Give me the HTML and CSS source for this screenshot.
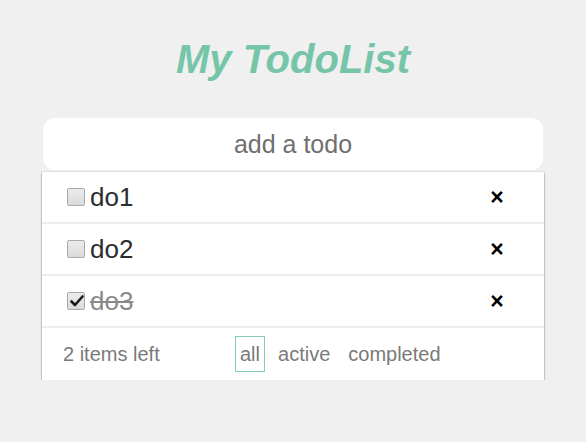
FILE: index.html
```html
<!DOCTYPE html>
<html>
<head>
<meta charset="utf-8">
<link rel="stylesheet" href="styles.css">
</head>
<body>
<div class="app">
  <h1 class="title">My TodoList</h1>
  <input class="new-todo" type="text" placeholder="add a todo">
  <div class="list">
    <div class="item">
      <span class="check"></span>
      <span class="label">do1</span>
      <span class="del">×</span>
    </div>
    <div class="item">
      <span class="check"></span>
      <span class="label">do2</span>
      <span class="del">×</span>
    </div>
    <div class="item done">
      <span class="check checked"><svg viewBox="0 0 18 18" width="18" height="18"><path d="M3.5 9.5 L7 13 L14.5 4.5" fill="none" stroke="#1a1a1a" stroke-width="2.6" stroke-linecap="round" stroke-linejoin="round"/></svg></span>
      <span class="label">do3</span>
      <span class="del">×</span>
    </div>
    <div class="footer">
      <span class="left">2 items left</span>
      <div class="filters">
        <span class="filter active">all</span>
        <span class="filter">active</span>
        <span class="filter">completed</span>
      </div>
    </div>
  </div>
</div>
</body>
</html>
```

FILE: styles.css
```css
html, body {
  margin: 0;
  padding: 0;
  background: #f0f0f0;
  font-family: "Liberation Sans", Arial, sans-serif;
}
.app {
  display: flex;
  flex-direction: column;
  align-items: center;
  padding-top: 36px;
}
.title {
  margin: 0 0 36px 0;
  font-size: 40px;
  line-height: 46px;
  font-style: italic;
  font-weight: bold;
  color: #76c5a9;
}
.new-todo {
  box-sizing: border-box;
  width: 500px;
  height: 52px;
  border: none;
  border-radius: 12px;
  background: #fff;
  text-align: center;
  font-family: "Liberation Sans", Arial, sans-serif;
  font-size: 25px;
  color: #333;
  outline: none;
  padding: 0;
}
.new-todo::placeholder {
  color: #6f6f6f;
}
.list {
  width: 502px;
  margin-top: 2px;
  background: #fff;
  box-shadow: 0 1px 2px rgba(0,0,0,0.45), 0 0 2px rgba(0,0,0,0.1);
}
.item {
  display: flex;
  align-items: center;
  height: 50px;
  border-bottom: 2px solid #ececec;
  padding-left: 25px;
}
.check {
  box-sizing: border-box;
  width: 18px;
  height: 18px;
  border: 1px solid #a9a9a9;
  border-radius: 2px;
  background: linear-gradient(#ececec, #dadada);
  position: relative;
}
.check svg {
  position: absolute;
  left: 0;
  top: -1px;
}
.label {
  margin-left: 5px;
  font-size: 26px;
  color: #2d2d2d;
  flex: 1;
}
.done .label {
  color: #8a8a8a;
  text-decoration: line-through;
}
.del {
  width: 20px;
  margin-right: 37px;
  text-align: center;
  font-size: 23px;
  font-weight: bold;
  color: #000;
}
.footer {
  display: flex;
  align-items: center;
  height: 52px;
  padding-left: 21px;
}
.left {
  width: 172px;
  font-size: 20px;
  color: #7a7a7a;
}
.filters {
  display: flex;
  gap: 8px;
}
.filter {
  font-size: 20px;
  color: #7a7a7a;
  padding: 6px 4px 5px;
  border: 1px solid transparent;
}
.filter.active {
  border-color: #86cdb6;
}
```
